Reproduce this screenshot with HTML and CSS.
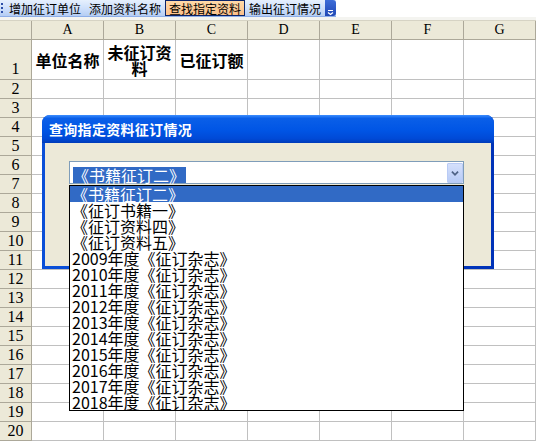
FILE: index.html
```html
<!DOCTYPE html>
<html lang="zh-CN">
<head>
<meta charset="utf-8">
<title>查找指定资料</title>
<link rel="stylesheet" href="styles.css">
</head>
<body>
<div class="topbar">
  <div class="toolbar">
    <span class="grip"></span>
    <span class="tb-item">增加征订单位</span>
    <span class="tb-item">添加资料名称</span>
    <span class="tb-item active">查找指定资料</span>
    <span class="tb-item">输出征订情况</span>
    <span class="tb-more"><svg width="11" height="17" viewBox="0 0 11 17"><path d="M3 10.5h5" stroke="#fff" stroke-width="1"/><path d="M3 12.5l2.5 2 2.5-2" fill="none" stroke="#fff" stroke-width="1.3"/></svg></span>
  </div>
</div>
<div class="strip"></div>
<div class="sheet">
  <div class="corner"></div>
  <div class="colh">A</div><div class="colh">B</div><div class="colh">C</div><div class="colh">D</div><div class="colh">E</div><div class="colh">F</div><div class="colh">G</div>

  <div class="rowh first">1</div>
  <div class="cell title">单位名称</div><div class="cell title">未征订资料</div><div class="cell title">已征订额</div><div class="cell"></div><div class="cell"></div><div class="cell"></div><div class="cell"></div>

  <div class="rowh">2</div><div class="cell"></div><div class="cell"></div><div class="cell"></div><div class="cell"></div><div class="cell"></div><div class="cell"></div><div class="cell"></div>
  <div class="rowh">3</div><div class="cell"></div><div class="cell"></div><div class="cell"></div><div class="cell"></div><div class="cell"></div><div class="cell"></div><div class="cell"></div>
  <div class="rowh">4</div><div class="cell"></div><div class="cell"></div><div class="cell"></div><div class="cell"></div><div class="cell"></div><div class="cell"></div><div class="cell"></div>
  <div class="rowh">5</div><div class="cell"></div><div class="cell"></div><div class="cell"></div><div class="cell"></div><div class="cell"></div><div class="cell"></div><div class="cell"></div>
  <div class="rowh">6</div><div class="cell"></div><div class="cell"></div><div class="cell"></div><div class="cell"></div><div class="cell"></div><div class="cell"></div><div class="cell"></div>
  <div class="rowh">7</div><div class="cell"></div><div class="cell"></div><div class="cell"></div><div class="cell"></div><div class="cell"></div><div class="cell"></div><div class="cell"></div>
  <div class="rowh">8</div><div class="cell"></div><div class="cell"></div><div class="cell"></div><div class="cell"></div><div class="cell"></div><div class="cell"></div><div class="cell"></div>
  <div class="rowh">9</div><div class="cell"></div><div class="cell"></div><div class="cell"></div><div class="cell"></div><div class="cell"></div><div class="cell"></div><div class="cell"></div>
  <div class="rowh">10</div><div class="cell"></div><div class="cell"></div><div class="cell"></div><div class="cell"></div><div class="cell"></div><div class="cell"></div><div class="cell"></div>
  <div class="rowh">11</div><div class="cell"></div><div class="cell"></div><div class="cell"></div><div class="cell"></div><div class="cell"></div><div class="cell"></div><div class="cell"></div>
  <div class="rowh">12</div><div class="cell"></div><div class="cell"></div><div class="cell"></div><div class="cell"></div><div class="cell"></div><div class="cell"></div><div class="cell"></div>
  <div class="rowh">13</div><div class="cell"></div><div class="cell"></div><div class="cell"></div><div class="cell"></div><div class="cell"></div><div class="cell"></div><div class="cell"></div>
  <div class="rowh">14</div><div class="cell"></div><div class="cell"></div><div class="cell"></div><div class="cell"></div><div class="cell"></div><div class="cell"></div><div class="cell"></div>
  <div class="rowh">15</div><div class="cell"></div><div class="cell"></div><div class="cell"></div><div class="cell"></div><div class="cell"></div><div class="cell"></div><div class="cell"></div>
  <div class="rowh">16</div><div class="cell"></div><div class="cell"></div><div class="cell"></div><div class="cell"></div><div class="cell"></div><div class="cell"></div><div class="cell"></div>
  <div class="rowh">17</div><div class="cell"></div><div class="cell"></div><div class="cell"></div><div class="cell"></div><div class="cell"></div><div class="cell"></div><div class="cell"></div>
  <div class="rowh">18</div><div class="cell"></div><div class="cell"></div><div class="cell"></div><div class="cell"></div><div class="cell"></div><div class="cell"></div><div class="cell"></div>
  <div class="rowh">19</div><div class="cell"></div><div class="cell"></div><div class="cell"></div><div class="cell"></div><div class="cell"></div><div class="cell"></div><div class="cell"></div>
  <div class="rowh">20</div><div class="cell"></div><div class="cell"></div><div class="cell"></div><div class="cell"></div><div class="cell"></div><div class="cell"></div><div class="cell"></div>
</div>

<div class="dialog">
  <div class="dlg-title">查询指定资料征订情况</div>
  <div class="dlg-body">
    <div class="combo">
      <div class="combo-value"><span class="sel">《书籍征订二》</span></div>
      <div class="combo-btn"><svg width="16" height="20" viewBox="0 0 16 20"><path d="M4.5 8.5l3.5 3.5 3.5-3.5" fill="none" stroke="#4D6185" stroke-width="2"/></svg></div>
      <ul class="combo-list">
        <li class="hl">《书籍征订二》</li>
        <li>《征订书籍一》</li>
        <li>《征订资料四》</li>
        <li>《征订资料五》</li>
        <li>2009年度《征订杂志》</li>
        <li>2010年度《征订杂志》</li>
        <li>2011年度《征订杂志》</li>
        <li>2012年度《征订杂志》</li>
        <li>2013年度《征订杂志》</li>
        <li>2014年度《征订杂志》</li>
        <li>2015年度《征订杂志》</li>
        <li>2016年度《征订杂志》</li>
        <li>2017年度《征订杂志》</li>
        <li>2018年度《征订杂志》</li>
      </ul>
    </div>
  </div>
</div>
</body>
</html>
```
FILE: styles.css
```css
* { box-sizing: border-box; }
html, body { margin: 0; padding: 0; }
body {
  width: 536px;
  height: 441px;
  overflow: hidden;
  background: #fff;
  font-family: "Noto Sans CJK SC", sans-serif;
  position: relative;
}

/* toolbar */
.topbar { height: 17px; display: flex; }
.toolbar {
  width: 336px;
  height: 17px;
  display: flex;
  align-items: stretch;
  padding-left: 4px;
  background: linear-gradient(#E6F0FD, #CADDFA 60%, #B4CDF3);
  border-bottom: 1px solid #8DAEE8;
  position: relative;
}
.grip {
  width: 2px;
  margin: 3px 2px 0 -3px;
  height: 11px;
  background: repeating-linear-gradient(#2C4FA8 0 2px, transparent 2px 4px);
}
.tb-item {
  font-size: 12px;
  line-height: 16px;
  color: #000;
  padding: 0 3px;
  border: 1px solid transparent;
  white-space: nowrap;
}
.tb-item.active {
  background: linear-gradient(#FFD9A8, #FBC08A);
  border-color: #0A246A;
}
.tb-more {
  margin-left: auto;
  width: 11px;
  background: linear-gradient(#3D6DD8, #1F47B4);
  border-radius: 0 3px 3px 0;
  display: flex;
}
.strip {
  height: 4px;
  background: #F4F4F0;
  border-bottom: 1px solid #D6D3C4;
}

/* sheet */
.sheet {
  display: grid;
  grid-template-columns: 32px repeat(7, 72px);
  grid-template-rows: 19px 40px repeat(19, 19px);
}
.corner, .colh, .rowh {
  background: #ECE9D8;
  border-right: 1px solid #ACA899;
  border-bottom: 1px solid #ACA899;
}
.colh {
  font-family: "Liberation Serif", serif;
  font-size: 14px;
  line-height: 18px;
  text-align: center;
  color: #000;
}
.rowh {
  font-family: "Liberation Serif", serif;
  font-size: 16px;
  line-height: 18px;
  text-align: center;
  color: #000;
}
.rowh.first {
  display: flex;
  align-items: flex-end;
  justify-content: center;
  padding-bottom: 1px;
}
.cell {
  border-right: 1px solid #C0C0C0;
  border-bottom: 1px solid #C0C0C0;
}
.cell.title {
  display: flex;
  align-items: center;
  justify-content: center;
  text-align: center;
  font-weight: bold;
  font-size: 16px;
  line-height: 16px;
  padding: 0 2px;
}

/* dialog */
.dialog {
  position: absolute;
  left: 42px;
  top: 115px;
  width: 452px;
  height: 154px;
  display: flex;
  flex-direction: column;
  background: linear-gradient(90deg, #0A4FD8, #0047D0 50%, #0032B8);
  border-radius: 8px 8px 0 0;
  padding: 0 3px 3px 3px;
}
.dlg-title {
  height: 28px;
  margin: 0 -3px;
  padding-left: 7px;
  border-radius: 8px 8px 0 0;
  background: linear-gradient(#3D8EFF 0, #0A5FE8 12%, #0055E5 55%, #0049D6 85%, #003BB8 100%);
  color: #fff;
  font-weight: bold;
  font-size: 14px;
  line-height: 28px;
  letter-spacing: 0.3px;
}
.dlg-body {
  flex: 1;
  background: #ECE9D8;
  padding: 18px 0 0 24px;
}
.combo {
  position: relative;
  width: 395px;
  height: 23px;
  background: #fff;
  border: 1px solid #7F9DB9;
  display: flex;
  justify-content: space-between;
}
.combo-value {
  padding: 1px 0 0 3px;
}
.sel {
  display: inline-block;
  background: #316AC5;
  color: #fff;
  font-size: 16px;
  line-height: 16px;
  height: 16px;
  padding-right: 1px;
}
.combo-btn {
  width: 16px;
  height: 20px;
  margin: 1px 0 0 0;
  background: linear-gradient(#D5E0FB, #B7CBF6);
  border: 1px solid #B9CBF5;
  border-radius: 1px;
  display: flex;
  align-items: center;
  justify-content: center;
}
.combo-btn svg { display: block; }
.combo-list {
  position: absolute;
  left: -1px;
  top: 23px;
  width: 395px;
  margin: 0;
  padding: 0;
  list-style: none;
  background: #fff;
  border: 1px solid #000;
}
.combo-list li {
  height: 16px;
  font-size: 16px;
  line-height: 16px;
  padding-left: 2px;
  color: #000;
  white-space: nowrap;
}
.combo-list li.hl {
  background: #316AC5;
  color: #fff;
}
```
